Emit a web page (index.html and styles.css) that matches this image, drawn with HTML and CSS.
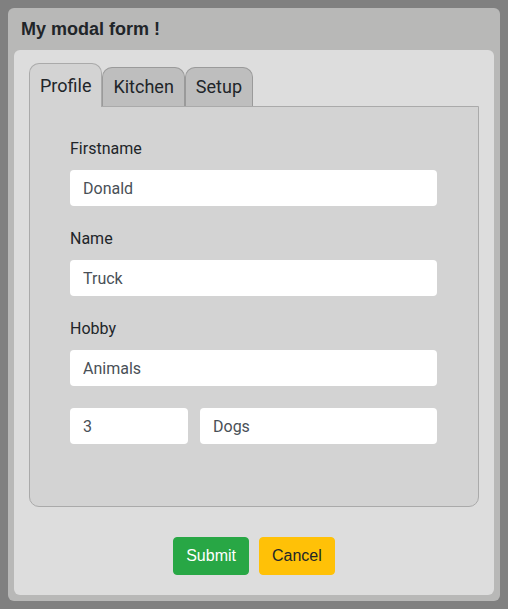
FILE: index.html
```html
<!DOCTYPE html>
<html lang="en">
<head>
<meta charset="utf-8">
<title>My modal form</title>
<link rel="stylesheet" href="styles.css">
</head>
<body>
<div class="modal">
  <div class="modal-title">My modal form !</div>
  <div class="modal-body">
    <div class="tabs">
      <div class="tab active">Profile</div>
      <div class="tab">Kitchen</div>
      <div class="tab">Setup</div>
    </div>
    <div class="panel">
      <div class="field">
        <label class="label">Firstname</label>
        <input class="input" type="text" value="Donald">
      </div>
      <div class="field">
        <label class="label">Name</label>
        <input class="input" type="text" value="Truck">
      </div>
      <div class="field last">
        <label class="label">Hobby</label>
        <input class="input" type="text" value="Animals">
      </div>
      <div class="row">
        <input class="input small" type="text" value="3">
        <input class="input grow" type="text" value="Dogs">
      </div>
    </div>
    <div class="actions">
      <button class="btn btn-submit">Submit</button>
      <button class="btn btn-cancel">Cancel</button>
    </div>
  </div>
</div>
</body>
</html>
```

FILE: styles.css
```css
html, body {
  margin: 0;
  padding: 0;
}
body {
  background: #808080;
  padding: 8px;
  height: 609px;
  box-sizing: border-box;
  font-family: Roboto, "Liberation Sans", sans-serif;
  color: #212529;
}
.modal {
  background: #b8b8b7;
  border-radius: 6px;
  padding: 0 6px 6px 6px;
  width: 492px;
  box-sizing: border-box;
  height: 593px;
  display: flex;
  flex-direction: column;
}
.modal-title {
  font-family: "Liberation Sans", Arial, sans-serif;
  font-weight: bold;
  font-size: 18px;
  line-height: 42px;
  height: 42px;
  padding-left: 7px;
  color: #212529;
}
.modal-body {
  background: #dddddd;
  border-radius: 6px;
  padding: 13px 15px 0 15px;
  flex: 1;
}
.tabs {
  display: flex;
  align-items: flex-end;
  position: relative;
  z-index: 1;
}
.tab {
  font-size: 18px;
  height: 39px;
  line-height: 38px;
  padding: 0 10px;
  box-sizing: border-box;
  border: 1px solid #9a9a9a;
  border-bottom: none;
  border-radius: 10px 10px 0 0;
  background: #bebebe;
  color: #212529;
}
.tab.active {
  background: #d3d3d3;
  height: 44px;
  line-height: 44px;
  margin-bottom: -1px;
  border-color: #aaaaaa;
}
.panel {
  background: #d3d3d3;
  border: 1px solid #aaaaaa;
  border-radius: 0 0 10px 10px;
  padding: 29px 41px 62px 40px;
}
.field {
  display: flex;
  flex-direction: column;
  margin-bottom: 20px;
}
.field.last {
  margin-bottom: 22px;
}
.label {
  font-size: 16px;
  line-height: 24px;
  padding-top: 1px;
  margin-bottom: 9px;
  color: #212529;
}
.input {
  font-family: Roboto, "Liberation Sans", sans-serif;
  font-size: 16px;
  color: #495057;
  background: #ffffff;
  border: none;
  border-radius: 4px;
  height: 36px;
  padding: 0 13px;
  box-sizing: border-box;
  outline: none;
  width: 100%;
  display: block;
}
.row {
  display: flex;
  gap: 12px;
}
.input.small {
  width: 118px;
  flex: none;
}
.input.grow {
  flex: 1;
  width: auto;
  min-width: 0;
}
.actions {
  display: flex;
  justify-content: center;
  gap: 10px;
  margin-top: 30px;
}
.btn {
  font-family: "Liberation Sans", Arial, sans-serif;
  font-size: 16px;
  height: 38px;
  padding: 0 12px;
  border: 1px solid transparent;
  border-radius: 4px;
  line-height: 36px;
}
.btn-submit {
  background: #28a745;
  border-color: #28a745;
  color: #ffffff;
}
.btn-cancel {
  background: #ffc107;
  border-color: #ffc107;
  color: #212529;
}
```
